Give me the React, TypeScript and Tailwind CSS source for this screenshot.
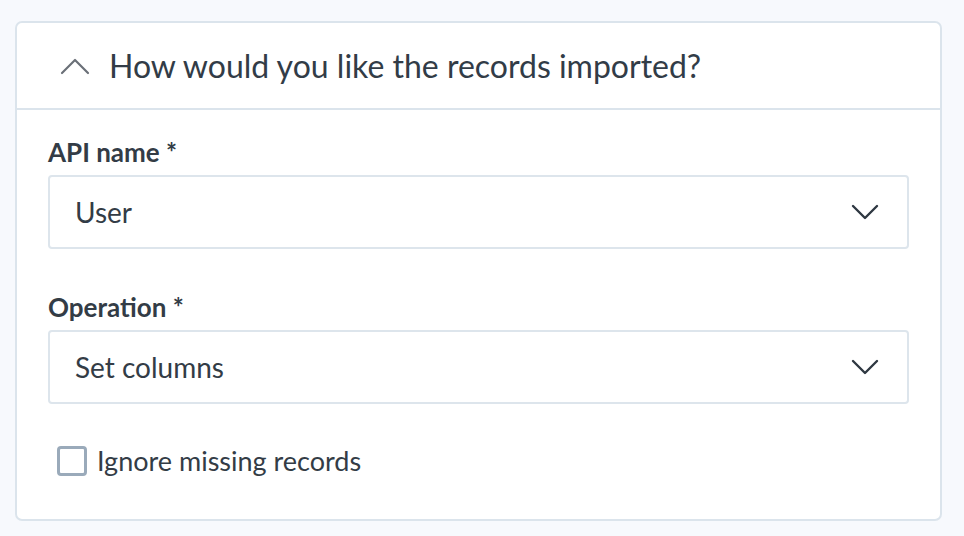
import React, { useState } from 'react';

const ChevronUp: React.FC = () => (
  <svg width="30" height="18" viewBox="0 0 30 18" fill="none">
    <path d="M2 16 L15 3 L28 16" stroke="#6b7078" strokeWidth="2.2" strokeLinecap="round" strokeLinejoin="round" />
  </svg>
);

const ChevronDown: React.FC = () => (
  <svg width="28" height="16" viewBox="0 0 28 16" fill="none">
    <path d="M2 2 L14 14 L26 2" stroke="#2f3842" strokeWidth="2.4" strokeLinecap="round" strokeLinejoin="round" />
  </svg>
);

const SelectField: React.FC<{ label: string; value: string }> = ({ label, value }) => (
  <div className="flex flex-col">
    <label className="text-[26px] font-bold text-[#333c46] leading-[32px] mb-[7px]">{label}</label>
    <div className="h-[74px] rounded-[4px] border-2 border-[#dde5ec] bg-white flex items-center justify-between pl-[25px] pr-[28px]">
      <span className="text-[28px] text-[#333c46]">{value}</span>
      <ChevronDown />
    </div>
  </div>
);

export default function App() {
  const [ignoreMissing, setIgnoreMissing] = useState(false);

  return (
    <div className="min-h-screen bg-[#f7f9fd] px-[15px] pt-[21px]" style={{ fontFamily: 'Lato, "Noto Sans", sans-serif' }}>
      <div className="w-[927px] h-[500px] rounded-[7px] border-2 border-[#dbe4ec] bg-white">
        <div className="h-[87px] border-b-2 border-[#dbe4ec] flex items-center pl-[43px] gap-[19px]">
          <ChevronUp />
          <h2 className="text-[32px] text-[#323c47]">How would you like the records imported?</h2>
        </div>

        <div className="px-[31px] pt-[26px] flex flex-col gap-[42px]">
          <SelectField label="API name *" value="User" />
          <SelectField label="Operation *" value="Set columns" />
        </div>

        <label className="flex items-center gap-[10px] pl-[40px] mt-[37px] cursor-pointer">
          <input
            type="checkbox"
            checked={ignoreMissing}
            onChange={(e) => setIgnoreMissing(e.target.checked)}
            className="appearance-none w-[30px] h-[30px] rounded-[4px] border-[3px] border-[#9aaaba] bg-white"
          />
          <span className="text-[27px] text-[#333c46]">Ignore missing records</span>
        </label>
      </div>
    </div>
  );
}
